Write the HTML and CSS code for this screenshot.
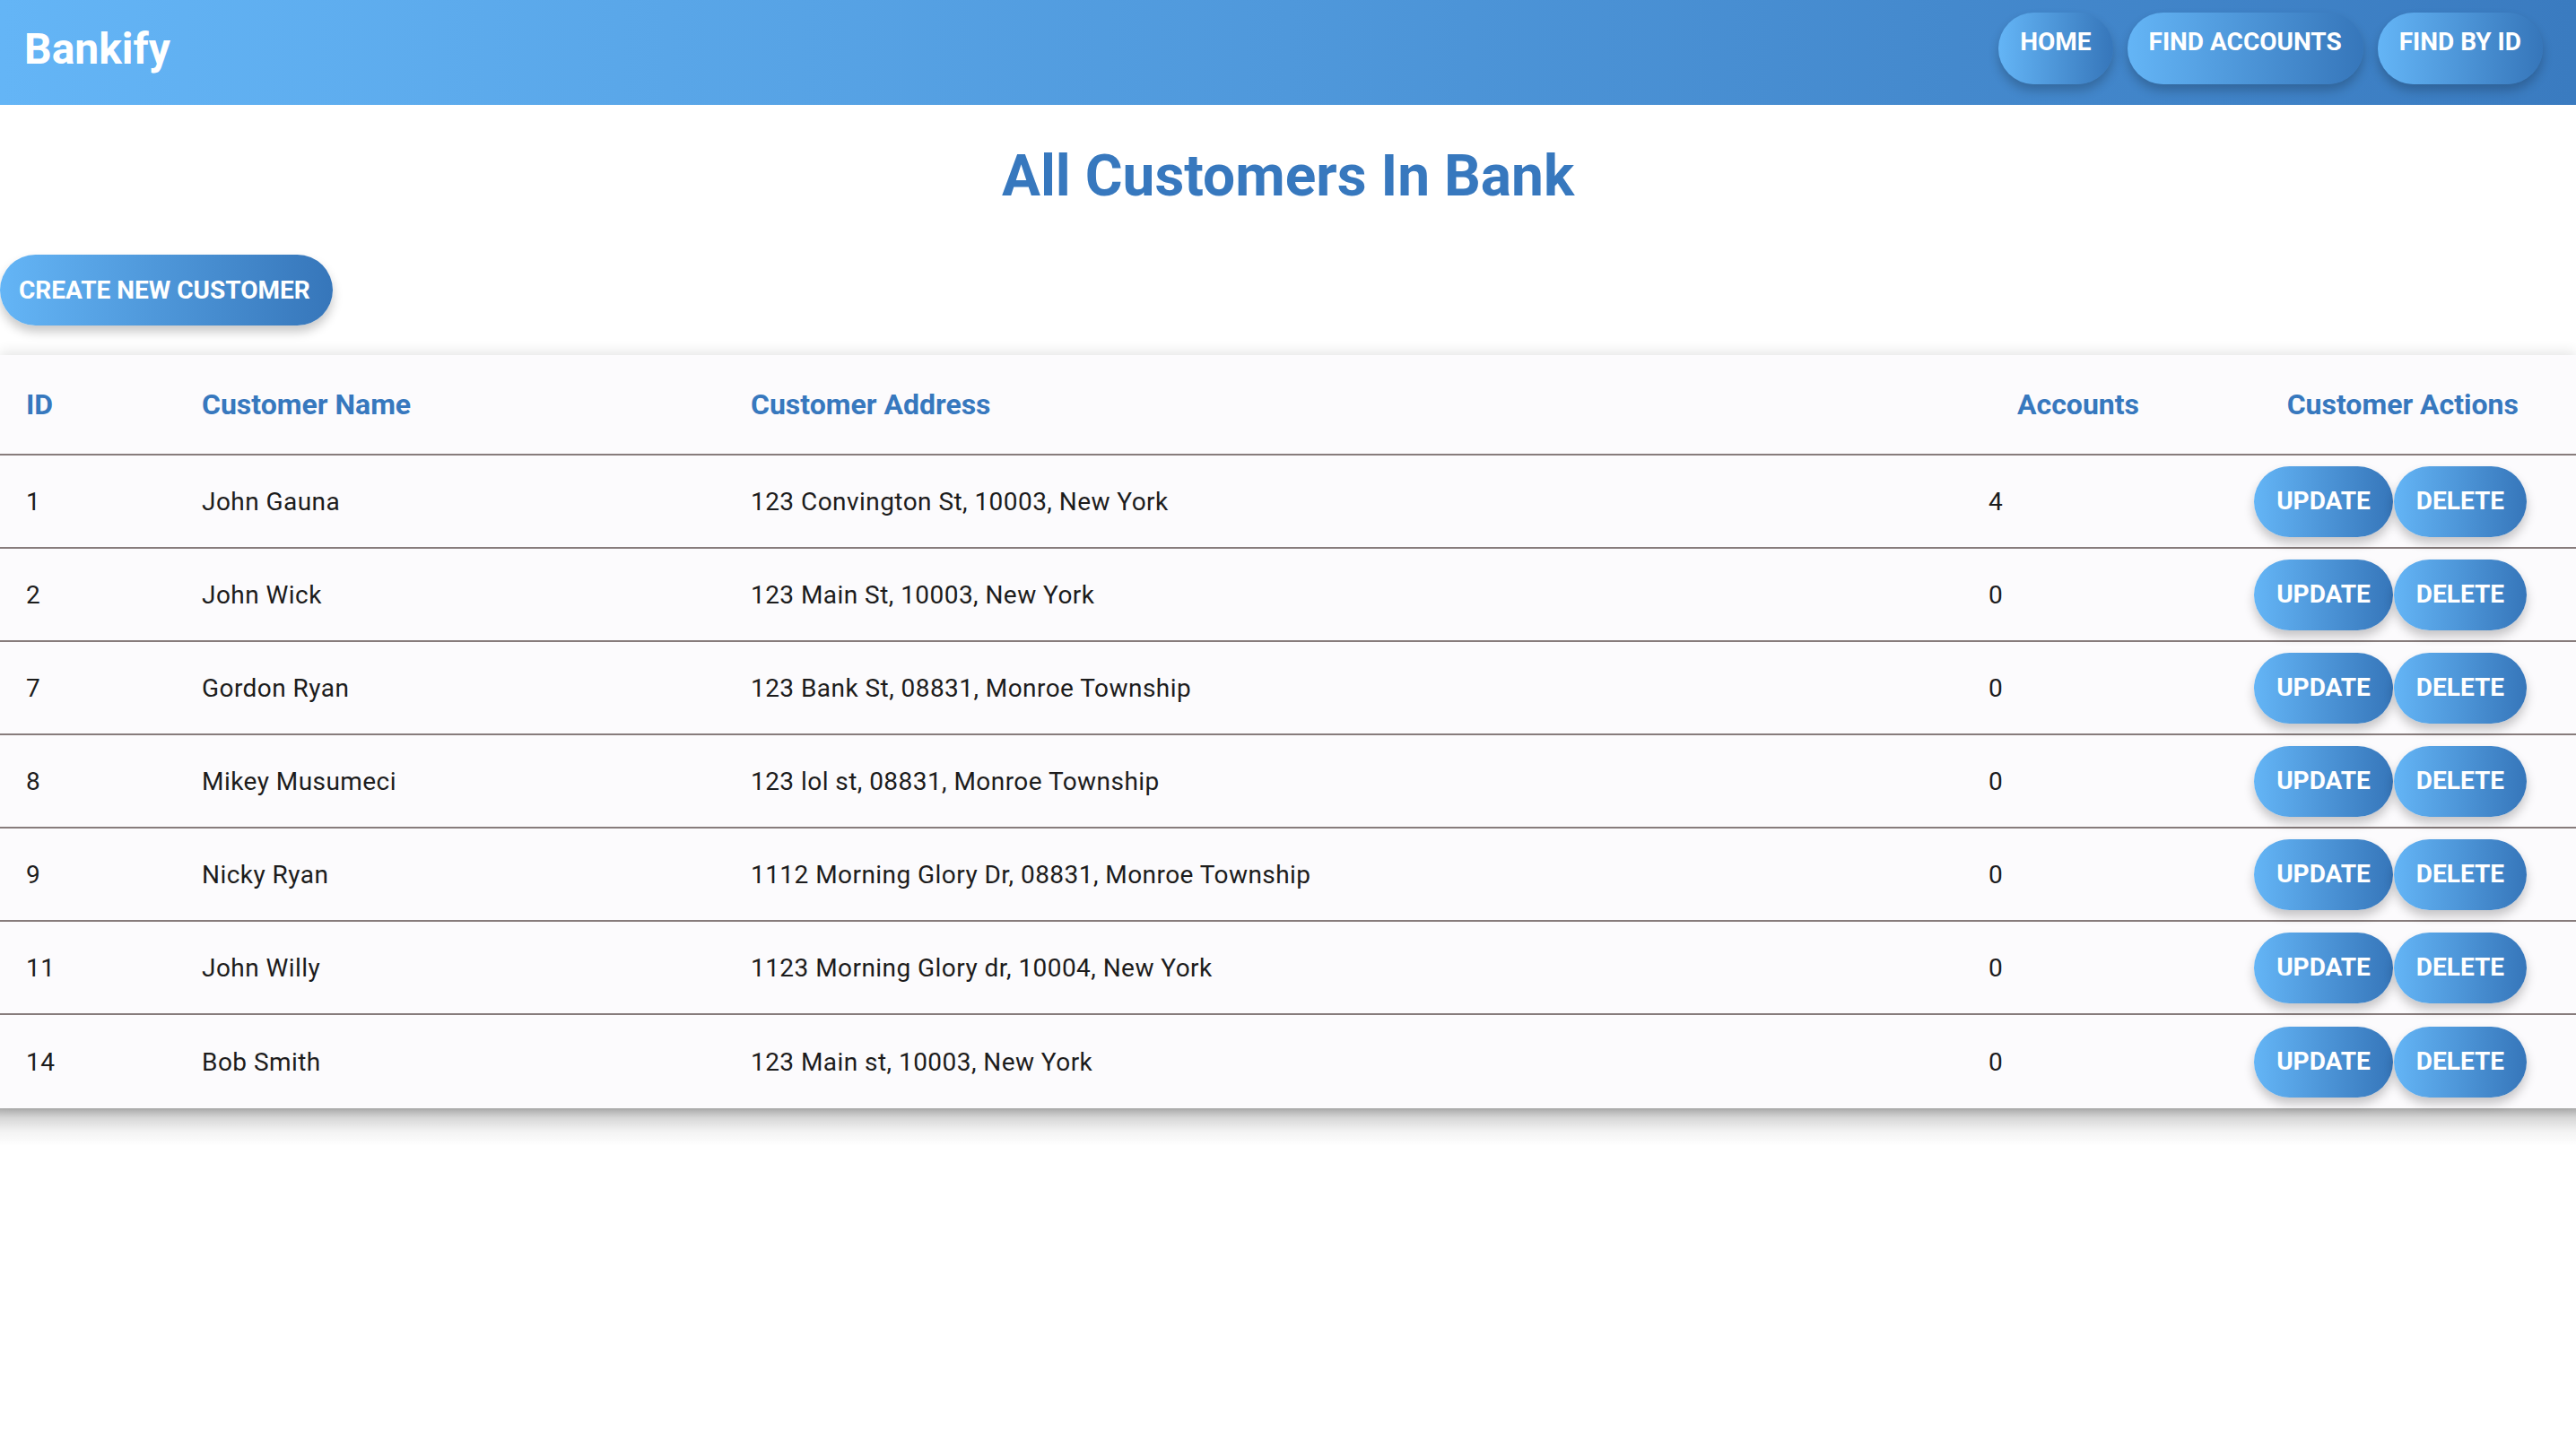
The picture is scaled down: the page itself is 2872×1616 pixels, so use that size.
FILE: index.html
```html
<!DOCTYPE html>
<html lang="en">
<head>
<meta charset="utf-8">
<title>Bankify</title>
<link rel="stylesheet" href="styles.css">
</head>
<body>
<header class="appbar">
  <div class="brand">Bankify</div>
  <nav class="nav">
    <button class="btn nav-btn">HOME</button>
    <button class="btn nav-btn">FIND ACCOUNTS</button>
    <button class="btn nav-btn">FIND BY ID</button>
  </nav>
</header>
<main class="page">
  <h1 class="title">All Customers In Bank</h1>
  <div class="toolbar">
    <button class="btn create-btn">CREATE NEW CUSTOMER</button>
  </div>
  <div class="table-wrap">
    <table class="customers">
      <colgroup>
        <col class="c-id"><col class="c-name"><col class="c-addr"><col class="c-acc"><col class="c-act">
      </colgroup>
      <thead>
        <tr>
          <th>ID</th>
          <th>Customer Name</th>
          <th>Customer Address</th>
          <th class="acc-h">Accounts</th>
          <th class="act-h">Customer Actions</th>
        </tr>
      </thead>
      <tbody>
        <tr><td>1</td><td>John Gauna</td><td>123 Convington St, 10003, New York</td><td class="acc">4</td><td class="act"><div class="actions"><button class="btn row-btn">UPDATE</button><button class="btn row-btn">DELETE</button></div></td></tr>
        <tr><td>2</td><td>John Wick</td><td>123 Main St, 10003, New York</td><td class="acc">0</td><td class="act"><div class="actions"><button class="btn row-btn">UPDATE</button><button class="btn row-btn">DELETE</button></div></td></tr>
        <tr><td>7</td><td>Gordon Ryan</td><td>123 Bank St, 08831, Monroe Township</td><td class="acc">0</td><td class="act"><div class="actions"><button class="btn row-btn">UPDATE</button><button class="btn row-btn">DELETE</button></div></td></tr>
        <tr><td>8</td><td>Mikey Musumeci</td><td>123 lol st, 08831, Monroe Township</td><td class="acc">0</td><td class="act"><div class="actions"><button class="btn row-btn">UPDATE</button><button class="btn row-btn">DELETE</button></div></td></tr>
        <tr><td>9</td><td>Nicky Ryan</td><td>1112 Morning Glory Dr, 08831, Monroe Township</td><td class="acc">0</td><td class="act"><div class="actions"><button class="btn row-btn">UPDATE</button><button class="btn row-btn">DELETE</button></div></td></tr>
        <tr><td>11</td><td>John Willy</td><td>1123 Morning Glory dr, 10004, New York</td><td class="acc">0</td><td class="act"><div class="actions"><button class="btn row-btn">UPDATE</button><button class="btn row-btn">DELETE</button></div></td></tr>
        <tr><td>14</td><td>Bob Smith</td><td>123 Main st, 10003, New York</td><td class="acc">0</td><td class="act"><div class="actions"><button class="btn row-btn">UPDATE</button><button class="btn row-btn">DELETE</button></div></td></tr>
      </tbody>
    </table>
  </div>
  <div class="table-shadow"></div>
</main>
</body>
</html>
```

FILE: styles.css
```css
* { box-sizing: border-box; }
html, body { margin: 0; padding: 0; background: #ffffff; }
body { font-family: Roboto, "Liberation Sans", Arial, sans-serif; color: #1f1f1f; }

.appbar {
  height: 117px;
  display: flex;
  justify-content: space-between;
  align-items: flex-start;
  padding: 0 37px 0 27px;
  background: linear-gradient(90deg, #64b5f6 0%, #3a7bc0 100%);
}
.brand {
  margin-top: 31px;
  font-size: 48px;
  line-height: 48px;
  font-weight: 700;
  color: #ffffff;
}
.nav { display: flex; gap: 16px; margin-top: 14px; }

.btn {
  border: 0;
  border-radius: 999px;
  background: linear-gradient(90deg, #64b5f6 0%, #3676ba 100%);
  color: #ffffff;
  font-family: Roboto, "Liberation Sans", Arial, sans-serif;
  font-weight: 700;
  font-size: 28px;
  line-height: 28px;
  box-shadow: 0 7px 12px rgba(0, 0, 0, 0.22);
  cursor: pointer;
}
.nav-btn { height: 80px; padding: 19px 24px 33px; }

.page { padding: 0; }
.title {
  margin: 48px 0 0;
  text-align: center;
  font-size: 64px;
  line-height: 64px;
  font-weight: 700;
  color: #3778be;
}
.toolbar { margin-top: 55px; display: flex; }
.create-btn { height: 79px; padding: 0 25px 0 21px; }

.table-wrap {
  margin-top: 33px;
  background: #fcfbfd;
  box-shadow: 0 -3px 14px rgba(0, 0, 0, 0.11);
}
.table-shadow {
  height: 42px;
  background: linear-gradient(180deg, rgba(0, 0, 0, 0.32) 0%, rgba(0, 0, 0, 0.16) 25%, rgba(0, 0, 0, 0.05) 60%, rgba(0, 0, 0, 0) 100%);
}
.customers {
  width: 100%;
  border-collapse: collapse;
  table-layout: fixed;
}
.c-id { width: 196px; }
.c-name { width: 612px; }
.c-addr { width: 1387px; }
.c-acc { width: 220px; }
.c-act { width: 457px; }

.customers th {
  height: 111px;
  padding: 0 0 0 29px;
  text-align: left;
  font-size: 32px;
  font-weight: 700;
  color: #3778be;
  border-bottom: 2px solid #877c7c;
}
.customers th.acc-h { text-align: right; padding: 0 30px 0 0; }
.customers th.act-h { text-align: right; padding: 0 64px 0 0; }

.customers td {
  height: 104px;
  padding: 0 0 0 29px;
  font-size: 28px;
  letter-spacing: 0.45px;
  color: #1c1c1c;
  border-bottom: 2px solid #877c7c;
}
.customers tbody tr:last-child td { border-bottom: 0; height: 105px; }
.customers td.acc { padding-left: 22px; }
.customers td.act { padding: 0 55px 0 0; }
.actions { display: flex; justify-content: flex-end; gap: 1px; }
.row-btn { height: 79px; padding: 0 25px; letter-spacing: 0; }
```
